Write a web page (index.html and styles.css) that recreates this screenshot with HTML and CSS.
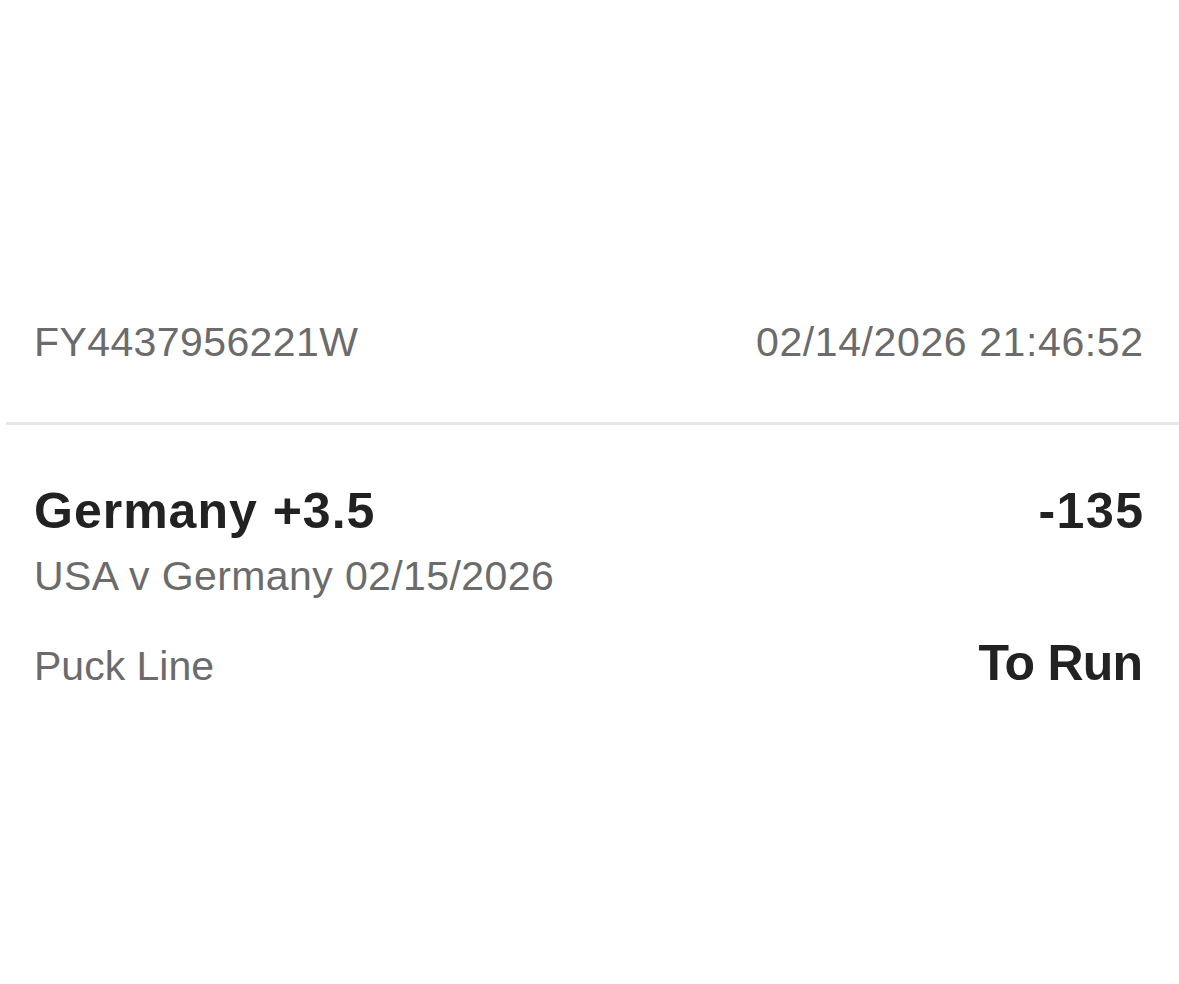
FILE: index.html
```html
<!DOCTYPE html>
<html lang="en">
<head>
<meta charset="utf-8">
<title>Bet slip</title>
<link rel="stylesheet" href="styles.css">
</head>
<body>
<main class="slip">
  <div class="top-space"></div>
  <div class="meta-row">
    <span class="bet-id">FY4437956221W</span>
    <span class="bet-date">02/14/2026 21:46:52</span>
  </div>
  <hr class="divider">
  <section class="selection">
    <div class="sel-row">
      <span class="sel-name">Germany +3.5</span>
      <span class="sel-odds">-135</span>
    </div>
    <div class="event">USA v Germany 02/15/2026</div>
    <div class="market-row">
      <span class="market">Puck Line</span>
      <span class="status">To Run</span>
    </div>
  </section>
</main>
</body>
</html>
```

FILE: styles.css
```css
html, body {
  margin: 0;
  padding: 0;
  background: #ffffff;
}

body {
  font-family: "Liberation Sans", Arial, sans-serif;
  width: 1179px;
  height: 984px;
  overflow: hidden;
}

.slip {
  display: flex;
  flex-direction: column;
}

.top-space {
  height: 318px;
}

.meta-row {
  display: flex;
  justify-content: space-between;
  padding: 0 36px 0 34px;
  font-size: 41px;
  line-height: 48px;
  color: #6b6b6b;
}

.bet-id {
  letter-spacing: 0.4px;
}

.bet-date {
  letter-spacing: 0.6px;
  margin-right: -0.6px;
}

.divider {
  margin: 56px 0 0 6px;
  border: 0;
  height: 3px;
  background: #e6e6e6;
}

.selection {
  display: flex;
  flex-direction: column;
  padding: 58px 36px 0 34px;
}

.sel-row {
  display: flex;
  justify-content: space-between;
  align-items: baseline;
  font-size: 50px;
  line-height: 56px;
  font-weight: 700;
  color: #222222;
}

.sel-name {
  letter-spacing: 1px;
}

.sel-odds {
  letter-spacing: 1.5px;
  margin-right: -1.5px;
}

.event {
  margin-top: 13px;
  font-size: 41px;
  line-height: 48px;
  color: #6b6b6b;
  letter-spacing: 0.4px;
}

.market-row {
  margin-top: 35px;
  display: flex;
  justify-content: space-between;
  align-items: baseline;
  line-height: 56px;
}

.market {
  font-size: 41px;
  color: #6b6b6b;
}

.status {
  font-size: 50px;
  font-weight: 700;
  color: #222222;
  letter-spacing: -0.8px;
  margin-right: 0.8px;
}
```
